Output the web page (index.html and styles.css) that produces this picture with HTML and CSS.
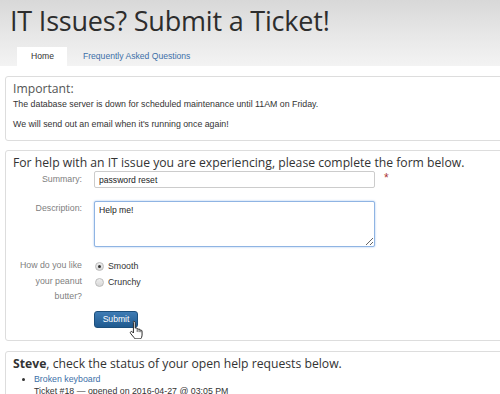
FILE: index.html
```html
<!DOCTYPE html>
<html lang="en">
<head>
    <meta charset="UTF-8">
    <title>IT Issues? Submit a Ticket!</title>
    <link rel="stylesheet" href="styles.css">
</head>
<body>
    <header class="site-header">
        <h1>IT Issues? Submit a Ticket!</h1>
        <nav class="tabs">
            <a href="#" class="tab active">Home</a>
            <a href="#" class="tab">Frequently Asked Questions</a>
        </nav>
    </header>

    <main class="content">
        <section class="panel notice">
            <h2>Important:</h2>
            <p>The database server is down for scheduled maintenance until 11AM on Friday.</p>
            <p>We will send out an email when it's running once again!</p>
        </section>

        <section class="panel form-panel">
            <h2>For help with an IT issue you are experiencing, please complete the form below.</h2>
            <form class="ticket-form">
                <label for="summary" class="field-label">Summary:</label>
                <div class="field">
                    <input type="text" id="summary" value="password reset">
                    <span class="required">*</span>
                </div>

                <label for="description" class="field-label desc-label">Description:</label>
                <div class="field">
                    <textarea id="description">Help me!</textarea>
                </div>

                <span class="field-label radio-row">How do you like your peanut butter?</span>
                <div class="field radios radio-row">
                    <label><span class="radio checked"></span> Smooth</label>
                    <label><span class="radio"></span> Crunchy</label>
                </div>

                <span class="submit-gap"></span>
                <div class="field submit-row">
                    <button type="submit">Submit</button>
                    <svg class="cursor" width="16" height="19" viewBox="0 0 14 18">
                        <path d="M4 1.2c.8 0 1.3.6 1.3 1.3v5.2l.4-.1c.7-.2 1.3.1 1.5.7.6-.3 1.3 0 1.5.6.6-.3 1.4 0 1.6.7.7-.2 1.5.3 1.5 1.1v3.6c0 1.6-.6 2.8-1.4 3.6H5.2c-.6-.8-1.5-1.8-2.3-2.8L1 12.8c-.5-.6-.4-1.3.1-1.7.5-.4 1.2-.3 1.6.2l.9 1V2.5C3.6 1.8 3.2 1.2 4 1.2z" fill="#fff" stroke="#222" stroke-width="0.9" stroke-linejoin="round"/>
                        <path d="M7.2 8.3v3M9 8.9v2.6M10.7 9.6v2" stroke="#222" stroke-width="0.7"/>
                    </svg>
                </div>
            </form>
        </section>

        <section class="panel">
            <h2><strong>Steve</strong>, check the status of your open help requests below.</h2>
            <ul class="requests">
                <li>
                    <a href="#">Broken keyboard</a><br>
                    Ticket #18 &mdash; opened on 2016-04-27 @ 03:05 PM
                </li>
            </ul>
        </section>
    </main>
</body>
</html>
```

FILE: styles.css
```css
/* Ticket page */
body {
    margin: 0;
    font-family: "Liberation Sans", Arial, sans-serif;
    font-size: 8.8px;
    color: #333;
    background: #fff;
    overflow: hidden;
}

.site-header {
    background: linear-gradient(180deg, #d8d8d8 0%, #e8e8e8 55%, #f3f3f3 100%);
    padding: 2px 0 0 10px;
    height: 66px;
    box-sizing: border-box;
    display: flex;
    flex-direction: column;
    justify-content: space-between;
}

.site-header h1 {
    margin: 0;
    font-family: "Open Sans", sans-serif;
    font-weight: 400;
    font-size: 27px;
    color: #2d2d2d;
    letter-spacing: -0.2px;
}

.tabs {
    display: flex;
    padding-left: 7px;
}

.tab {
    font-size: 8.6px;
    color: #3c6fa8;
    text-decoration: none;
    padding: 5px 15px 5px 16px;
    line-height: 9px;
}

.tab.active {
    background: #fff;
    color: #333;
    padding: 5px 13px 5px 14px;
}

.content {
    padding: 10px 0 0 5px;
    margin-right: -8px;
}

.panel {
    border: 1px solid #ddd;
    border-radius: 3px;
    padding: 4px 7px 6px;
    margin-bottom: 10px;
}

.panel h2 {
    margin: 0;
    font-family: "Open Sans", sans-serif;
    font-weight: 400;
    font-size: 12.2px;
    color: #333;
    line-height: 16px;
}

.notice {
    padding-bottom: 10px;
    margin-bottom: 9px;
}

.notice h2 {
    color: #555;
}

.notice p {
    margin: 2px 0 9px;
    line-height: 11px;
}

.notice p:last-child {
    margin-bottom: 0;
}

.form-panel {
    padding-bottom: 12px;
}

.ticket-form {
    display: grid;
    grid-template-columns: 69px 1fr;
    column-gap: 12px;
    row-gap: 13px;
    margin-top: 0;
}

.field-label {
    text-align: right;
    color: #808080;
    font-size: 8.8px;
    line-height: 15.5px;
    padding-top: 1px;
}

.desc-label {
    padding-top: 0;
}

.radio-row {
    margin-top: -3px;
}

.submit-gap,
.submit-row {
    margin-top: -7px;
}

.field {
    display: flex;
    align-items: flex-start;
}

.field input,
.field textarea {
    width: 281px;
    box-sizing: border-box;
    border: 1px solid #ccc;
    border-radius: 2px;
    font-family: "Liberation Sans", Arial, sans-serif;
    font-size: 8.6px;
    color: #222;
    padding: 2px 4px;
    margin: 0;
}

.field input {
    height: 17px;
}

.field textarea {
    height: 46px;
    resize: both;
    border-color: #8fb4e3;
    box-shadow: 0 0 2px rgba(80, 140, 220, 0.6);
    padding-top: 3px;
}

.required {
    color: #a33;
    font-size: 12px;
    margin-left: 9px;
    line-height: 14px;
}

.radios {
    flex-direction: column;
    gap: 2px;
    padding-top: 2px;
}

.radios label {
    display: flex;
    align-items: center;
    gap: 4px;
    font-size: 8.8px;
    color: #333;
    line-height: 14px;
    padding-left: 1px;
}

.radio {
    width: 7px;
    height: 7px;
    border-radius: 50%;
    border: 1px solid #bbb;
    background: linear-gradient(#eee, #d8d8d8);
    display: inline-block;
    position: relative;
}

.radio.checked::after {
    content: "";
    position: absolute;
    left: 2px;
    top: 2px;
    width: 3px;
    height: 3px;
    border-radius: 50%;
    background: #333;
}

.submit-row {
    position: relative;
}

button {
    background: linear-gradient(#3f7cb5, #1f5a8f);
    border: 1px solid #1c4f7c;
    border-radius: 3px;
    color: #fff;
    font-family: "Liberation Sans", Arial, sans-serif;
    font-size: 8.6px;
    padding: 2px 6px;
    height: 17px;
    width: 44px;
}

.cursor {
    position: absolute;
    left: 35px;
    top: 9px;
}

.requests {
    margin: 1px 0 0;
    padding-left: 21px;
    line-height: 12px;
}

.requests a {
    color: #3c6fa8;
    text-decoration: none;
}
```
